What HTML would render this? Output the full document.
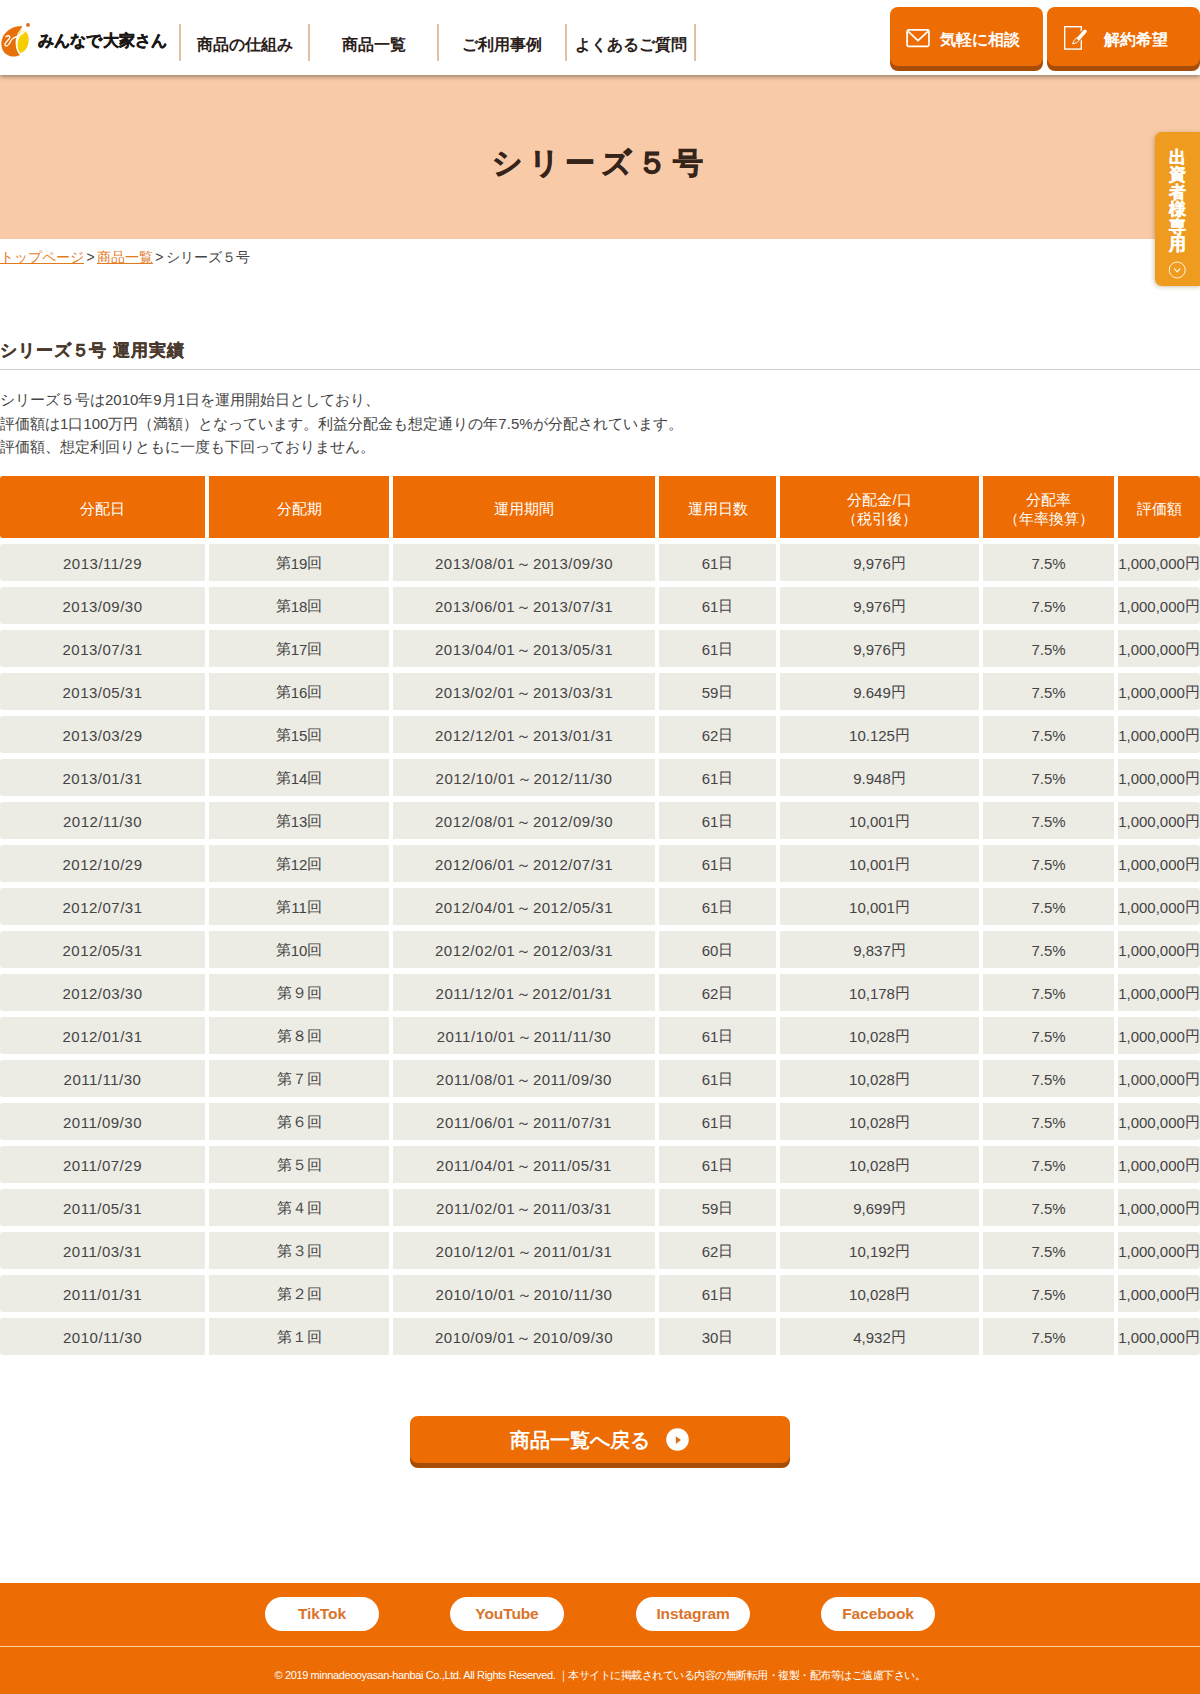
<!DOCTYPE html>
<html lang="ja">
<head>
<meta charset="utf-8">
<title>シリーズ５号</title>
<style>
*{box-sizing:border-box;margin:0;padding:0}
html,body{width:1200px;height:1694px;overflow:hidden;background:#fff}
body{font-family:"Liberation Sans",sans-serif;color:#444;position:relative}
a{color:inherit;text-decoration:none}

/* header */
#hd{position:absolute;left:0;top:0;width:1200px;height:75px;background:#fff;box-shadow:0 2px 4px rgba(0,0,0,.35);z-index:5}
#logo{position:absolute;left:0;top:20px;width:40px;height:40px}
#logot{position:absolute;left:37.5px;top:28.5px;font-size:16px;line-height:24px;font-weight:bold;color:#1a1715;letter-spacing:.25px;white-space:nowrap;-webkit-text-stroke:.5px #1a1715}
#nav{position:absolute;left:179px;top:24px;height:37px;display:flex;border-left:2px solid #e1bfa1}
#nav a{display:block;width:128.8px;height:37px;border-right:2px solid #e1bfa1;text-align:center;font-size:16px;font-weight:bold;line-height:41px;color:#2a2019;white-space:nowrap;padding-left:1px}
.hb{position:absolute;top:7px;width:153px;height:59px;background:#ed6c03;border-radius:8px;box-shadow:0 5px 0 #a84d08;color:#fff;font-weight:bold;font-size:16px;line-height:66px;white-space:nowrap}
.hb svg{position:absolute}
.hb span{position:absolute;top:0}

/* hero */
#hero{position:absolute;left:0;top:75px;width:1200px;height:164px;background:#f8caa7}
#hero h1{position:absolute;left:0;top:66px;width:1200px;text-align:center;font-size:30px;line-height:44px;font-weight:bold;color:#35241a;letter-spacing:5.5px;padding-left:0;-webkit-text-stroke:.7px #35241a}

/* side tab */
#side{position:absolute;left:1155px;top:132px;width:46px;height:154px;background:#ef9b20;border-radius:7px 0 0 7px;box-shadow:-1px 1px 4px rgba(120,80,20,.35);z-index:6}
#side div{position:absolute;left:13px;top:16.5px;width:18px;font-size:17px;line-height:17.6px;font-weight:bold;color:#fff;text-align:center;-webkit-text-stroke:.4px #fff}
#side svg{position:absolute;left:13px;top:128.500px}

/* breadcrumb */
#bc{position:absolute;left:0;top:246px;font-size:14px;line-height:22px;color:#444;white-space:nowrap;word-spacing:-1.5px}
#bc a{color:#e27a1e;text-decoration:underline}

#h2{position:absolute;left:0;top:338px;font-size:17px;line-height:26px;font-weight:bold;color:#4a392d;white-space:nowrap;letter-spacing:.9px;-webkit-text-stroke:.3px #4a392d}
#hr{position:absolute;left:0;top:369px;width:1200px;height:1px;background:#cfcfcf}
#p{position:absolute;left:0;top:388px;font-size:15px;line-height:23.5px;color:#444;white-space:nowrap}

/* table */
#tb{position:absolute;left:0;top:476px;width:1200px}
.r{position:absolute;left:0;width:1200px;height:37px}
.r div,.h div{position:absolute;top:0;height:100%;text-align:center;white-space:nowrap}
.r div{background:#ecebe4;font-size:15px;line-height:38px;color:#444}
.h{position:absolute;left:0;top:0;width:1200px;height:62px}
.h div{background:#ed6c03;color:#fff;font-size:15px;line-height:19px;display:flex;align-items:center;justify-content:center;padding-top:3px}
.c1{left:0;width:205px}.c2{left:209px;width:180px}.c3{left:393px;width:262px}.c4{left:659px;width:117px}.c5{left:780px;width:199px}.c6{left:983px;width:131px}.c7{left:1118px;width:82px}
.r b{font-weight:normal;position:relative;top:1px}
.r .c1,.r .c3,.r .c6{line-height:40px}
.r .c1{letter-spacing:.5px}
.r .c3{letter-spacing:.5px;word-spacing:-3.5px}
.r .c1,.h .c1{border-radius:3px 0 0 3px}
.r .c7,.h .c7{border-radius:0 3px 3px 0}

/* back button */
#back{position:absolute;left:410px;top:1416px;width:380px;height:47px;background:#ed6c03;border-radius:8px;box-shadow:0 5px 0 #a84d08;color:#fff;font-weight:bold;font-size:19.7px;line-height:49px;white-space:nowrap}
#back span{position:absolute;left:100px;top:0}
#back svg{position:absolute;left:256px;top:12px}

/* footer */
#ft{position:absolute;left:0;top:1583px;width:1200px;height:111px;background:#ed6c03}
.pill{position:absolute;top:14px;width:114px;height:34px;border-radius:17px;background:#fff;color:#d9742a;font-weight:bold;font-size:15.5px;line-height:34px;text-align:center;letter-spacing:-.1px}
#fl{position:absolute;left:0;top:63px;width:1200px;height:1px;background:#fbd6a0}
#cp{position:absolute;left:0;top:83px;width:1200px;text-align:center;font-size:11px;line-height:18px;color:#fff;white-space:nowrap}
</style>
</head>
<body>
<div id="hd">
  <svg id="logo" viewBox="0 0 40 40">
<path d="M22.500 6.500C17 5.300 9.500 8 5 13.500 1 18.500 0.300 25 3 30.500c2.500 4.500 7.500 6.500 12 6 2.500-0.300 4.300-1 5.500-2-3-2.500-4.800-6.500-4.900-11-0.100-5 1.500-9.500 4-13 1-1.500 2-2.800 2.900-4z" fill="#e8700a"/>
<path d="M24.300 10.800c2 1 3.600 3.200 4.200 6.200 0.700 4 0 8.500-2.500 12-1.500 2.200-3.500 3.600-5.800 4.100-2-2.300-3.300-5.800-3.300-9.600 0-4.500 1.700-8 4-10.500 1-1 2.200-1.800 3.400-2.200z" fill="#f7cd03"/>
<path d="M24.300 10.800c-1.500-1-3-1.200-4-0.800-1.200 1.500-2 3.200-2.600 5 2.300-0.800 4.700-2.200 6.600-4.200z" fill="#f3e070"/>
<path d="M26.300 6c-2.300 2.700-4.500 5.500-6.200 8.500-2 3.500-3.300 7-3.300 10.500 0 4 1.500 7.500 3.700 9.800" fill="none" stroke="#fff" stroke-width="1.300" stroke-linecap="round"/>
<path d="M5.800 16.700c1.500-0.900 3.300-1.100 3.900-0.200 0.700 1.200-0.800 2.700-2.300 4.200-1.700 1.700-3 3.300-2.300 4.600 0.800 1.300 2.800 0.400 4-1.300 1.200-1.700 1.600-3.500 3-4.900 1.500-1.500 3.800-2.300 5.800-3 2.300-0.800 4.700-2.300 6.500-4.300" fill="none" stroke="#fff" stroke-width="1.300" stroke-linecap="round" stroke-linejoin="round"/>
<circle cx="28" cy="4.900" r="1.900" fill="#dc6a1c"/>
</svg>
  <div id="logot">みんなで大家さん</div>
  <div id="nav"><a>商品の仕組み</a><a>商品一覧</a><a>ご利用事例</a><a>よくあるご質問</a></div>
  <div class="hb" style="left:890px"><svg style="left:16px;top:21px" width="25" height="21" viewBox="0 0 25 21"><rect x="1.100" y="1.850" width="21.850" height="16.600" rx="1.600" fill="none" stroke="#fff" stroke-width="1.700"/><path d="M1.900 3.200L12 12.600 22.200 3.200" fill="none" stroke="#fff" stroke-width="1.700" stroke-linejoin="round"/></svg><span style="left:50px">気軽に相談</span></div>
  <div class="hb" style="left:1047px"><svg style="left:16px;top:18px" width="27" height="27" viewBox="0 0 27 27"><rect x="1.700" y="1.700" width="16.600" height="22.400" fill="none" stroke="#fff" stroke-width="1.400"/><path d="M22 6.300L15.600 13.600" stroke="#ed6c03" stroke-width="6" stroke-linecap="round"/><path d="M14.400 12.300l2.400 2.300-3 3-4.200 1.400 1.700-3.900z" fill="#ed6c03" stroke="#fff" stroke-width="1" stroke-linejoin="round"/><path d="M22 6.300L15.800 13.400" stroke="#fff" stroke-width="3.600" stroke-linecap="round"/></svg><span style="left:57px">解約希望</span></div>
</div>
<div id="hero"><h1>シリーズ５号</h1></div>
<div id="side"><div>出資者様専用</div><svg width="18" height="18" viewBox="0 0 18 18"><circle cx="9.200" cy="9" r="8" fill="none" stroke="#fff5d8" stroke-width="1"/><path d="M6.200 7.500l3 3.300 3-3.300" fill="none" stroke="#fff5d8" stroke-width="1.200"/></svg></div>
<div id="bc"><a>トップページ</a> &gt; <a>商品一覧</a> &gt; シリーズ５号</div>
<div id="h2">シリーズ５号 運用実績</div>
<div id="hr"></div>
<div id="p">シリーズ５号は2010年9月1日を運用開始日としており、<br>評価額は1口100万円（満額）となっています。利益分配金も想定通りの年7.5%が分配されています。<br>評価額、想定利回りともに一度も下回っておりません。</div>
<div id="tb">
<div class="h"><div class="c1">分配日</div><div class="c2">分配期</div><div class="c3">運用期間</div><div class="c4">運用日数</div><div class="c5">分配金/口<br>（税引後）</div><div class="c6">分配率<br>（年率換算）</div><div class="c7">評価額</div></div>
<div class="r" style="top:68px"><div class="c1">2013/11/29</div><div class="c2">第<b>19</b>回</div><div class="c3">2013/08/01 ～ 2013/09/30</div><div class="c4"><b>61</b>日</div><div class="c5"><b>9,976</b>円</div><div class="c6">7.5%</div><div class="c7"><b>1,000,000</b>円</div></div>
<div class="r" style="top:111px"><div class="c1">2013/09/30</div><div class="c2">第<b>18</b>回</div><div class="c3">2013/06/01 ～ 2013/07/31</div><div class="c4"><b>61</b>日</div><div class="c5"><b>9,976</b>円</div><div class="c6">7.5%</div><div class="c7"><b>1,000,000</b>円</div></div>
<div class="r" style="top:154px"><div class="c1">2013/07/31</div><div class="c2">第<b>17</b>回</div><div class="c3">2013/04/01 ～ 2013/05/31</div><div class="c4"><b>61</b>日</div><div class="c5"><b>9,976</b>円</div><div class="c6">7.5%</div><div class="c7"><b>1,000,000</b>円</div></div>
<div class="r" style="top:197px"><div class="c1">2013/05/31</div><div class="c2">第<b>16</b>回</div><div class="c3">2013/02/01 ～ 2013/03/31</div><div class="c4"><b>59</b>日</div><div class="c5"><b>9.649</b>円</div><div class="c6">7.5%</div><div class="c7"><b>1,000,000</b>円</div></div>
<div class="r" style="top:240px"><div class="c1">2013/03/29</div><div class="c2">第<b>15</b>回</div><div class="c3">2012/12/01 ～ 2013/01/31</div><div class="c4"><b>62</b>日</div><div class="c5"><b>10.125</b>円</div><div class="c6">7.5%</div><div class="c7"><b>1,000,000</b>円</div></div>
<div class="r" style="top:283px"><div class="c1">2013/01/31</div><div class="c2">第<b>14</b>回</div><div class="c3">2012/10/01 ～ 2012/11/30</div><div class="c4"><b>61</b>日</div><div class="c5"><b>9.948</b>円</div><div class="c6">7.5%</div><div class="c7"><b>1,000,000</b>円</div></div>
<div class="r" style="top:326px"><div class="c1">2012/11/30</div><div class="c2">第<b>13</b>回</div><div class="c3">2012/08/01 ～ 2012/09/30</div><div class="c4"><b>61</b>日</div><div class="c5"><b>10,001</b>円</div><div class="c6">7.5%</div><div class="c7"><b>1,000,000</b>円</div></div>
<div class="r" style="top:369px"><div class="c1">2012/10/29</div><div class="c2">第<b>12</b>回</div><div class="c3">2012/06/01 ～ 2012/07/31</div><div class="c4"><b>61</b>日</div><div class="c5"><b>10,001</b>円</div><div class="c6">7.5%</div><div class="c7"><b>1,000,000</b>円</div></div>
<div class="r" style="top:412px"><div class="c1">2012/07/31</div><div class="c2">第<b>11</b>回</div><div class="c3">2012/04/01 ～ 2012/05/31</div><div class="c4"><b>61</b>日</div><div class="c5"><b>10,001</b>円</div><div class="c6">7.5%</div><div class="c7"><b>1,000,000</b>円</div></div>
<div class="r" style="top:455px"><div class="c1">2012/05/31</div><div class="c2">第<b>10</b>回</div><div class="c3">2012/02/01 ～ 2012/03/31</div><div class="c4"><b>60</b>日</div><div class="c5"><b>9,837</b>円</div><div class="c6">7.5%</div><div class="c7"><b>1,000,000</b>円</div></div>
<div class="r" style="top:498px"><div class="c1">2012/03/30</div><div class="c2">第９回</div><div class="c3">2011/12/01 ～ 2012/01/31</div><div class="c4"><b>62</b>日</div><div class="c5"><b>10,178</b>円</div><div class="c6">7.5%</div><div class="c7"><b>1,000,000</b>円</div></div>
<div class="r" style="top:541px"><div class="c1">2012/01/31</div><div class="c2">第８回</div><div class="c3">2011/10/01 ～ 2011/11/30</div><div class="c4"><b>61</b>日</div><div class="c5"><b>10,028</b>円</div><div class="c6">7.5%</div><div class="c7"><b>1,000,000</b>円</div></div>
<div class="r" style="top:584px"><div class="c1">2011/11/30</div><div class="c2">第７回</div><div class="c3">2011/08/01 ～ 2011/09/30</div><div class="c4"><b>61</b>日</div><div class="c5"><b>10,028</b>円</div><div class="c6">7.5%</div><div class="c7"><b>1,000,000</b>円</div></div>
<div class="r" style="top:627px"><div class="c1">2011/09/30</div><div class="c2">第６回</div><div class="c3">2011/06/01 ～ 2011/07/31</div><div class="c4"><b>61</b>日</div><div class="c5"><b>10,028</b>円</div><div class="c6">7.5%</div><div class="c7"><b>1,000,000</b>円</div></div>
<div class="r" style="top:670px"><div class="c1">2011/07/29</div><div class="c2">第５回</div><div class="c3">2011/04/01 ～ 2011/05/31</div><div class="c4"><b>61</b>日</div><div class="c5"><b>10,028</b>円</div><div class="c6">7.5%</div><div class="c7"><b>1,000,000</b>円</div></div>
<div class="r" style="top:713px"><div class="c1">2011/05/31</div><div class="c2">第４回</div><div class="c3">2011/02/01 ～ 2011/03/31</div><div class="c4"><b>59</b>日</div><div class="c5"><b>9,699</b>円</div><div class="c6">7.5%</div><div class="c7"><b>1,000,000</b>円</div></div>
<div class="r" style="top:756px"><div class="c1">2011/03/31</div><div class="c2">第３回</div><div class="c3">2010/12/01 ～ 2011/01/31</div><div class="c4"><b>62</b>日</div><div class="c5"><b>10,192</b>円</div><div class="c6">7.5%</div><div class="c7"><b>1,000,000</b>円</div></div>
<div class="r" style="top:799px"><div class="c1">2011/01/31</div><div class="c2">第２回</div><div class="c3">2010/10/01 ～ 2010/11/30</div><div class="c4"><b>61</b>日</div><div class="c5"><b>10,028</b>円</div><div class="c6">7.5%</div><div class="c7"><b>1,000,000</b>円</div></div>
<div class="r" style="top:842px"><div class="c1">2010/11/30</div><div class="c2">第１回</div><div class="c3">2010/09/01 ～ 2010/09/30</div><div class="c4"><b>30</b>日</div><div class="c5"><b>4,932</b>円</div><div class="c6">7.5%</div><div class="c7"><b>1,000,000</b>円</div></div>
</div>
<div id="back"><span>商品一覧へ戻る</span><svg width="23" height="23" viewBox="0 0 23 23"><circle cx="11.500" cy="11.500" r="11.300" fill="#fff"/><path d="M9.800 8.200L15 12.100 9.800 16z" fill="#d9701c"/></svg></div>
<div id="ft">
  <div class="pill" style="left:265px">TikTok</div>
  <div class="pill" style="left:450px">YouTube</div>
  <div class="pill" style="left:636px">Instagram</div>
  <div class="pill" style="left:821px">Facebook</div>
  <div id="fl"></div>
  <div id="cp"><span style="letter-spacing:-.38px">© 2019 minnadeooyasan-hanbai Co.,Ltd. All Rights Reserved.</span><span style="letter-spacing:-.5px"> ｜本サイトに掲載されている内容の無断転用・複製・配布等はご遠慮下さい。</span></div>
</div>
</body>
</html>
